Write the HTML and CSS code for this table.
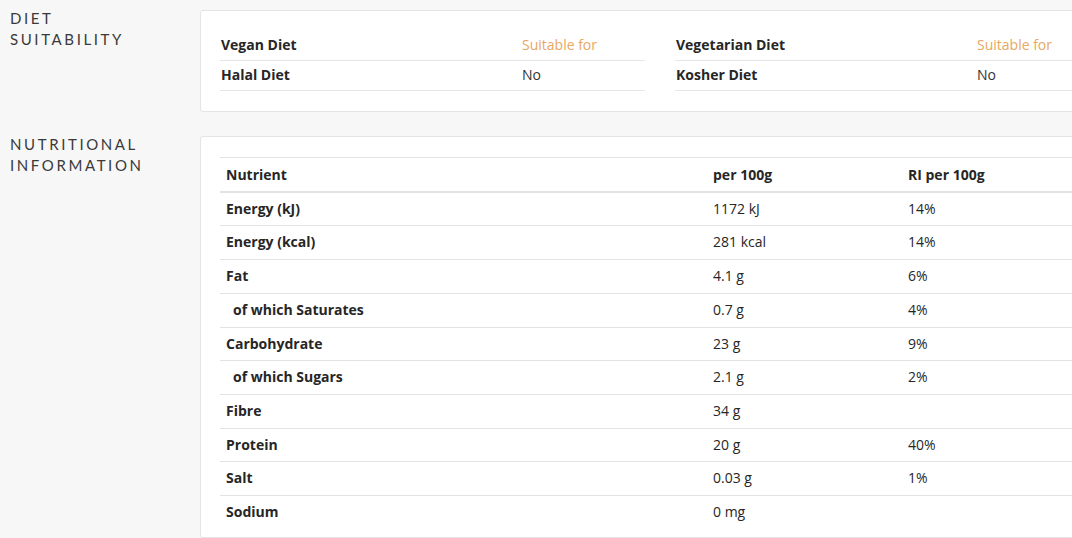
FILE: index.html
```html
<!DOCTYPE html>
<html>
<head>
<meta charset="utf-8">
<link rel="stylesheet" href="styles.css">
</head>
<body>
<div class="page">
  <section class="section">
    <h2 class="section-title">Diet<br>Suitability</h2>
    <div class="card diet-card">
      <div class="diet-col">
        <div class="diet-row"><span class="diet-label">Vegan Diet</span><span class="diet-value yes">Suitable for</span></div>
        <div class="diet-row"><span class="diet-label">Halal Diet</span><span class="diet-value">No</span></div>
      </div>
      <div class="diet-col">
        <div class="diet-row"><span class="diet-label">Vegetarian Diet</span><span class="diet-value yes">Suitable for</span></div>
        <div class="diet-row"><span class="diet-label">Kosher Diet</span><span class="diet-value">No</span></div>
      </div>
    </div>
  </section>
  <section class="section">
    <h2 class="section-title">Nutritional<br>Information</h2>
    <div class="card nutri-card">
      <table class="nutri">
        <thead>
          <tr><th class="c1">Nutrient</th><th class="c2">per 100g</th><th class="c3">RI per 100g</th></tr>
        </thead>
        <tbody>
          <tr><td class="name">Energy (kJ)</td><td>1172 kJ</td><td>14%</td></tr>
          <tr><td class="name">Energy (kcal)</td><td>281 kcal</td><td>14%</td></tr>
          <tr><td class="name">Fat</td><td>4.1 g</td><td>6%</td></tr>
          <tr><td class="name sub">of which Saturates</td><td>0.7 g</td><td>4%</td></tr>
          <tr><td class="name">Carbohydrate</td><td>23 g</td><td>9%</td></tr>
          <tr><td class="name sub">of which Sugars</td><td>2.1 g</td><td>2%</td></tr>
          <tr><td class="name">Fibre</td><td>34 g</td><td></td></tr>
          <tr><td class="name">Protein</td><td>20 g</td><td>40%</td></tr>
          <tr><td class="name">Salt</td><td>0.03 g</td><td>1%</td></tr>
          <tr><td class="name">Sodium</td><td>0 mg</td><td></td></tr>
        </tbody>
      </table>
    </div>
  </section>
</div>
</body>
</html>
```
FILE: styles.css
```css
html, body {
  margin: 0;
  padding: 0;
  background: #f7f7f7;
  overflow: hidden;
}
body {
  font-family: "Open Sans", "Liberation Sans", sans-serif;
  font-size: 14px;
  color: #262626;
}
.page {
  padding-top: 10px;
  width: 1120px;
}
.section {
  display: flex;
  align-items: flex-start;
  margin-bottom: 24px;
}
.section-title {
  width: 190px;
  margin: -2px 0 0 0;
  padding-left: 10px;
  font-family: Lato, "Liberation Sans", sans-serif;
  font-weight: 400;
  font-size: 15px;
  line-height: 21px;
  letter-spacing: 2.6px;
  text-transform: uppercase;
  color: #3a3a3a;
}
.card {
  background: #fff;
  border: 1px solid #e4e4e4;
  border-radius: 3px;
  width: 880px;
}
.diet-card {
  display: flex;
  gap: 30px;
  padding: 20px 19px 20px 19px;
}
.diet-col {
  flex: 0 0 425px;
}
.diet-row {
  box-sizing: border-box;
  display: flex;
  height: 30px;
  padding-bottom: 2px;
  align-items: center;
  border-bottom: 1px solid #e6e6e6;
}
.diet-label {
  width: 301px;
  font-weight: 700;
  padding-left: 1px;
}
.diet-value {
  color: #333;
}
.diet-value.yes {
  color: #e9a762;
}
.nutri-card {
  padding: 20px 19px 8px 19px;
}
.nutri {
  width: 880px;
  border-collapse: collapse;
}
.nutri th, .nutri td {
  text-align: left;
  padding: 8px 6px;
  line-height: 16.7px;
  border-bottom: 1px solid #e3e3e3;
}
.nutri th {
  font-weight: 700;
  padding-top: 9px;
  padding-bottom: 7px;
  border-top: 1px solid #e3e3e3;
  border-bottom: 2px solid #e3e3e3;
}
.nutri tbody tr:last-child td {
  border-bottom: none;
}
.c1 { width: 475px; }
.c2 { width: 183px; }
.nutri td.name {
  font-weight: 700;
}
.nutri td.sub {
  padding-left: 13px;
}
```
